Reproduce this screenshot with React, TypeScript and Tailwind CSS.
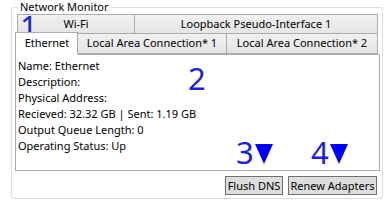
const font = { fontFamily: '"Noto Sans", "Liberation Sans", sans-serif' };

const lines = [
  "Name: Ethernet",
  "Description:",
  "Physical Address:",
  "Recieved: 32.32 GB | Sent: 1.19 GB",
  "Output Queue Length: 0",
  "Operating Status: Up",
];

function Tab({ label, className }: { label: string; className: string }) {
  return (
    <div
      className={
        "flex items-center justify-center whitespace-nowrap border border-[#acacac] bg-gradient-to-b from-[#f0f0f0] to-[#e5e5e5] text-[11px] text-black " +
        className
      }
    >
      {label}
    </div>
  );
}

function Marker({ n, className }: { n: string; className: string }) {
  return (
    <span className={"absolute flex items-center text-[31px] leading-[36px] text-[#1d1de8] " + className}>
      {n}
      <svg width="18" height="20" viewBox="0 0 18 20" className="ml-[1px] mt-[3px]">
        <polygon points="0,0 18,0 9,20" fill="#0000ff" />
      </svg>
    </span>
  );
}

export default function App() {
  return (
    <div className="relative h-[207px] w-[391px] overflow-hidden bg-white" style={font}>
      <div className="pl-[11px] pt-[7px]">
        {/* group box */}
        <div className="relative flex h-[192px] w-[372px] flex-col rounded-[3px] border border-[#d5dfe5] pl-[3px] pr-[2px] pt-[6px]">
          <span className="absolute left-[6px] top-[-8px] bg-white px-[2px] text-[11px] leading-[14px] text-black">
            Network Monitor
          </span>

          {/* tab rows */}
          <div className="flex h-[20px] px-[2px]">
            <Tab label="Wi-Fi" className="w-[118px]" />
            <Tab label="Loopback Pseudo-Interface 1" className="-ml-px flex-1" />
          </div>
          <div className="relative z-10 -mt-px flex h-[21px] items-end px-[2px]">
            <div className="-mx-[2px] -mb-px flex h-[23px] w-[64px] items-center justify-center border border-b-0 border-[#acacac] bg-white pb-[1px] text-[11px] text-black">
              Ethernet
            </div>
            <Tab label="Local Area Connection* 1" className="h-[21px] w-[150px]" />
            <Tab label="Local Area Connection* 2" className="-ml-px h-[21px] flex-1" />
          </div>

          {/* content panel */}
          <div className="h-[117px] border border-[#acacac] bg-white px-[2px] pt-[3px] text-[11px] leading-[16px] text-black">
            {lines.map((l) => (
              <div key={l}>{l}</div>
            ))}
          </div>

          {/* buttons */}
          <div className="flex justify-end gap-[5px] pr-[3px] pt-[5px]">
            <button className="h-[19px] w-[58px] whitespace-nowrap border border-[#707070] bg-[#dddddd] text-[11px] leading-[16px] text-black">
              Flush DNS
            </button>
            <button className="h-[19px] w-[89px] whitespace-nowrap border border-[#707070] bg-[#dddddd] text-[11px] leading-[16px] text-black">
              Renew Adapters
            </button>
          </div>
        </div>
      </div>

      {/* annotations */}
      <span className="absolute left-[20px] top-[8px] text-[31px] leading-[36px] text-[#1d1de8]">1</span>
      <span className="absolute left-[188px] top-[60px] text-[31px] leading-[36px] text-[#1d1de8]">2</span>
      <Marker n="3" className="left-[236px] top-[134px]" />
      <Marker n="4" className="left-[311px] top-[134px]" />
    </div>
  );
}
